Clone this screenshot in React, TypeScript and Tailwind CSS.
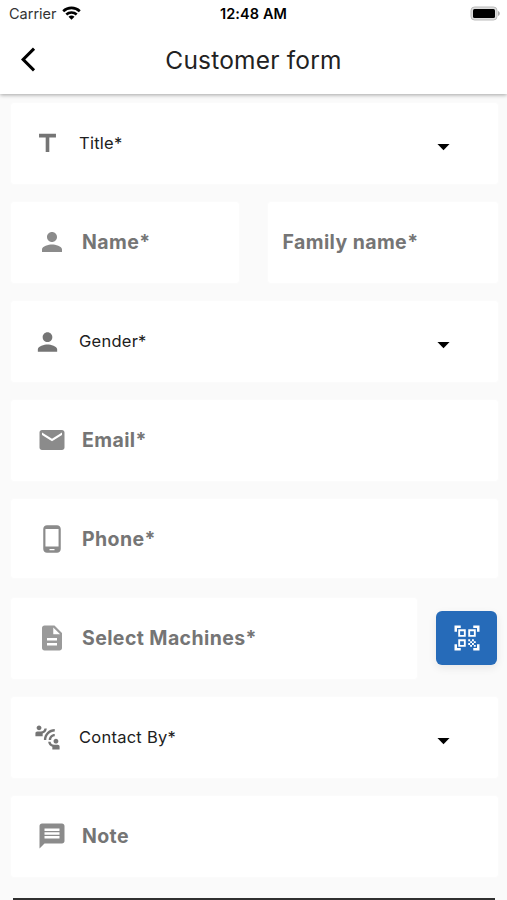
import type { ReactNode } from "react";
import {
  MdArrowBackIos,
  MdArrowDropDown,
  MdConnectWithoutContact,
  MdDescription,
  MdEmail,
  MdMessage,
  MdPerson,
  MdPhoneAndroid,
  MdQrCodeScanner,
  MdTitle,
} from "react-icons/md";

function SelectField({ icon, label }: { icon: ReactNode; label: string }) {
  return (
    <button className="flex h-[81px] w-full items-center rounded bg-white pl-[22px] pr-10 text-left shadow-[0_0_3px_rgba(255,255,255,0.9)]">
      <span className="flex w-[29px] justify-center text-[#757575]">{icon}</span>
      <span className="ml-[17px] pb-px text-[16.5px] tracking-[0.25px] text-[#202020]">{label}</span>
      <MdArrowDropDown className="ml-auto mt-[5px] text-black" size={29} />
    </button>
  );
}

function TextField({ icon, label, className = "h-[81px]" }: { icon?: ReactNode; label: string; className?: string }) {
  return (
    <label className={`flex items-center rounded bg-white shadow-[0_0_3px_rgba(255,255,255,0.9)] ${className}`}>
      {icon && <span className="ml-[26px] mr-[15px] flex w-[30px] justify-center pb-px text-[#8b8b8b]">{icon}</span>}
      <span className="text-[19.5px] font-bold tracking-[0.4px] text-[#757575]">{label}</span>
    </label>
  );
}

function StatusBar() {
  return (
    <div className="grid h-7 grid-cols-3 items-center pl-[9px] pr-[7px] text-black">
      <div className="flex items-center gap-[5px]">
        <span className="text-[14.5px] text-[#333]">Carrier</span>
        <svg className="-mt-0.5" width="19" height="14" viewBox="0 0 19 14" fill="none" stroke="#000" strokeWidth="2.6">
          <path d="M1.2 5.2a12 12 0 0 1 16.6 0" />
          <path d="M4.3 8.5a7.6 7.6 0 0 1 10.4 0" />
          <path d="M9.5 13.8 6.5 10.8a4.4 4.4 0 0 1 6 0z" fill="#000" stroke="none" />
        </svg>
      </div>
      <span className="-ml-0.5 text-center text-[14.5px] font-semibold tracking-[0.1px]">12:48 AM</span>
      <svg className="-mt-0.5 justify-self-end" width="31" height="15" viewBox="0 0 31 15">
        <rect x="2" y="1" width="26" height="13" rx="3.5" fill="#ddd" stroke="#bbb" />
        <rect x="4" y="3" width="22" height="9" rx="1.5" fill="#000" />
        <path d="M29 5v5c2.4-.8 2.4-4.2 0-5z" fill="#aaa" />
      </svg>
    </div>
  );
}

export default function App() {
  return (
    <div className="flex h-[900px] w-[507px] flex-col overflow-hidden bg-[#fafafa] font-['Inter',sans-serif]">
      <header className="relative h-[94px] shrink-0 bg-white shadow-[0_1px_4px_rgba(0,0,0,0.35)]">
        <StatusBar />
        <div className="grid h-[64px] grid-cols-[60px_1fr_60px] items-center">
          <button className="pb-px pl-[20.5px] text-black" aria-label="Back">
            <MdArrowBackIos size={29} />
          </button>
          <h1 className="text-center text-[24.5px] tracking-[0.2px] text-[#222]">Customer form</h1>
        </div>
      </header>
      <main className="flex flex-col gap-[18px] pl-[11px] pr-[9px] pt-[9px]">
        <SelectField icon={<MdTitle size={29} />} label="Title*" />
        <div className="flex justify-between">
          <TextField className="h-[81px] w-[228px]" icon={<MdPerson size={30} />} label="Name*" />
          <TextField className="h-[81px] w-[230px] pl-[14.5px]" label="Family name*" />
        </div>
        <SelectField icon={<MdPerson size={30} />} label="Gender*" />
        <TextField icon={<MdEmail size={30} />} label="Email*" />
        <TextField className="mb-[2px] h-[79px] pt-0.5" icon={<MdPhoneAndroid size={30} />} label="Phone*" />
        <div className="flex items-center justify-between">
          <TextField className="h-[81px] w-[406px]" icon={<MdDescription className="text-[#9a9a9a]" size={30} />} label="Select Machines*" />
          <button
            className="mb-0.5 mr-px flex h-[54px] w-[61px] items-center justify-center rounded-[6px] bg-[#266bb9] text-white shadow-[0_3px_8px_rgba(0,0,0,0.08)]"
            aria-label="Scan"
          >
            <MdQrCodeScanner size={30} />
          </button>
        </div>
        <SelectField icon={<MdConnectWithoutContact size={29} />} label="Contact By*" />
        <TextField icon={<MdMessage size={30} />} label="Note" />
        <div className="ml-0.5 mr-[3px] mt-[3px] h-10 bg-[#303030]" />
      </main>
    </div>
  );
}
